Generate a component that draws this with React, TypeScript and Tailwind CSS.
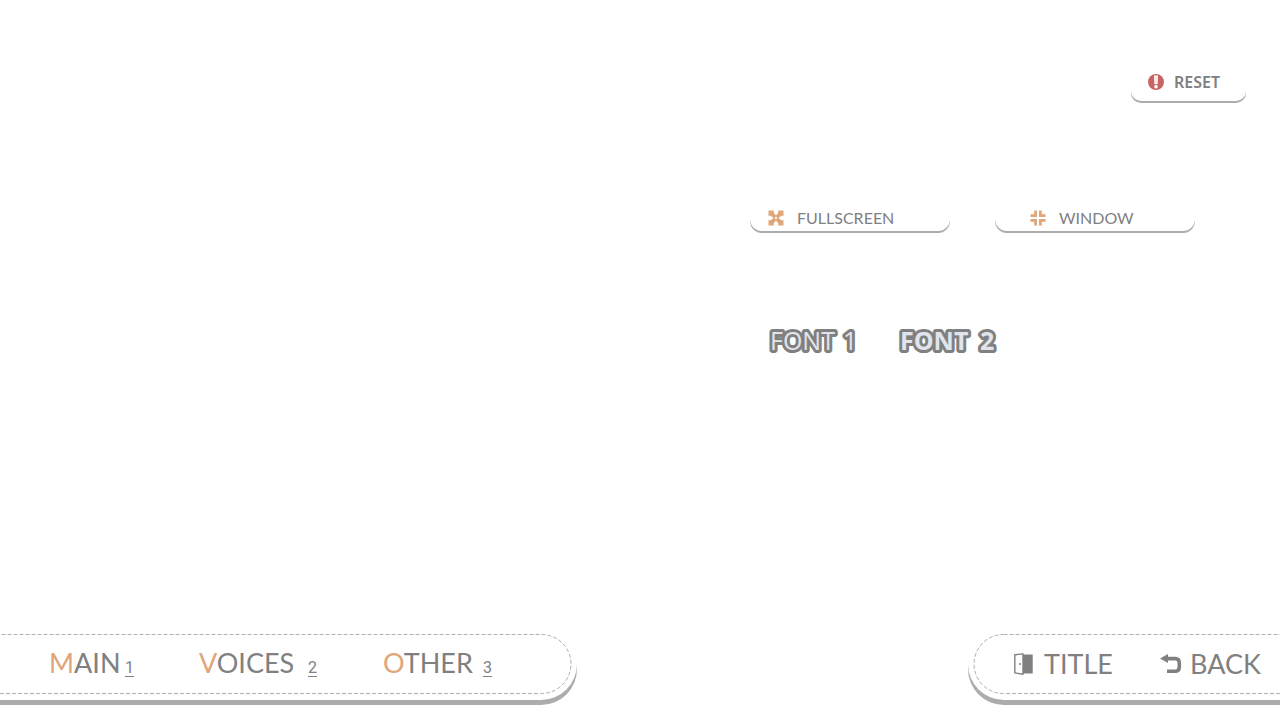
import type { ReactNode } from 'react';

const tabs = [
  { key: '1', first: 'M', rest: 'AIN', width: 'w-[150px]', label: 'w-[76px]' },
  { key: '2', first: 'V', rest: 'OICES', width: 'w-[184px]', label: 'w-[109px]' },
  { key: '3', first: 'O', rest: 'THER', width: 'w-[110px]', label: 'w-[100px]' },
];

function DashedOutline({ side }: { side: 'left' | 'right' }) {
  const place = side === 'left' ? '-left-10 w-[calc(100%+34px)]' : 'left-[6px] w-[calc(100%+34px)]';
  return (
    <svg aria-hidden="true" className={`pointer-events-none absolute top-[6px] h-[59px] overflow-visible ${place}`}>
      <rect x="0" y="0.5" width="100%" height="59" rx="29.5" fill="none" stroke="#b0b0b0" strokeWidth="1" strokeDasharray="4 2" />
    </svg>
  );
}

function ExpandIcon() {
  return (
    <svg aria-hidden="true" viewBox="0 0 16 16" className="size-4 shrink-0" fill="#e0a578">
      {[0, 90, 180, 270].map((a) => (
        <path key={a} transform={`rotate(${a} 8 8)`} d="M0.5 0.5H5.8V2.8L8 5.4V6.6L6.6 8H5.4L2.8 5.8H0.5Z" />
      ))}
    </svg>
  );
}

function ShrinkIcon() {
  return (
    <svg aria-hidden="true" viewBox="0 0 16 16" className="size-4 shrink-0" fill="#e0a578">
      {[0, 90, 180, 270].map((a) => (
        <path key={a} transform={`rotate(${a} 8 8)`} d="M4.2 0.5H7V7H0.5V4.2H4.2Z" />
      ))}
    </svg>
  );
}

function AlertIcon() {
  return (
    <svg aria-hidden="true" viewBox="0 0 16 16" className="size-4 shrink-0">
      <circle cx="8" cy="8" r="8" fill="#c96464" />
      <path d="M6 1.5H10L9.6 10.3H6.4Z" fill="#fff" />
      <path d="M7.6 2.4H8.4V9H7.6Z" fill="#c96464" opacity="0.35" />
      <circle cx="8" cy="12.8" r="1.8" fill="#fff" />
    </svg>
  );
}

function DoorIcon() {
  return (
    <svg aria-hidden="true" viewBox="0 0 20 22" className="h-[22px] w-5 shrink-0">
      <path d="M8 1.5H18.7V20.5H8Z" fill="#808080" />
      <path d="M0.8 1.8L9 0.9V21.2L0.8 19.9Z" fill="#fff" stroke="#808080" strokeWidth="1.4" strokeLinejoin="round" />
      <circle cx="6" cy="11" r="1" fill="#808080" />
    </svg>
  );
}

function ReturnIcon() {
  return (
    <svg aria-hidden="true" viewBox="0 0 22 20" className="h-5 w-[22px] shrink-0">
      <path d="M0 4.4L8 0V9Z" fill="#808080" />
      <path d="M6 4.6H15.2Q19.3 4.6 19.3 9V13Q19.3 17.3 15.2 17.3H7" fill="none" stroke="#808080" strokeWidth="3.6" />
    </svg>
  );
}

function ModeButton({ children, pad }: { children: ReactNode; pad: string }) {
  return (
    <button
      type="button"
      className={`flex h-[31px] w-[200px] items-center gap-[13px] rounded-xl bg-white pt-1 text-base text-[#808080] shadow-[0_2px_0_#acacac] ${pad}`}
    >
      {children}
    </button>
  );
}

function FontButton({ digit, digitX, className }: { digit: string; digitX: number; className: string }) {
  return (
    <button type="button" className={`w-[130px] text-left font-['Open_Sans',sans-serif] text-[25px] ${className}`}>
      <svg
        className="h-9 w-[110px] overflow-visible"
        fill="#e1e4eb"
        stroke="#808080"
        strokeWidth="6"
        strokeLinejoin="round"
        paintOrder="stroke"
      >
        <text x="0" y="27">FONT</text>
        <text x={digitX} y="27">{digit}</text>
      </svg>
    </button>
  );
}

export default function App() {
  return (
    <div className="flex min-h-screen flex-col overflow-x-hidden bg-white pb-[15px] font-[Lato,sans-serif] text-[#808080]">
      <header className="flex justify-end pt-[60px] pr-[34px]">
        <button
          type="button"
          className="flex h-[41px] w-[115px] items-center gap-[10px] rounded-[10px] bg-white pt-[2px] pl-[17px] font-['Noto_Sans',sans-serif] text-base font-semibold shadow-[0_2px_0_#acacac]"
        >
          <AlertIcon />
          RESET
        </button>
      </header>

      <main className="ml-auto w-[530px]">
        <div className="mt-[99px] flex gap-[45px]">
          <ModeButton pad="pl-[18px]"><ExpandIcon />FULLSCREEN</ModeButton>
          <ModeButton pad="pl-[35px]"><ShrinkIcon />WINDOW</ModeButton>
        </div>
        <div className="mt-[92px] flex items-center pl-5">
          <FontButton digit="1" digitX={73} className="font-medium" />
          <FontButton digit="2" digitX={80} className="font-bold" />
        </div>
      </main>

      <footer className="mt-auto flex items-start justify-between pb-[5px] text-[27px] leading-8">
        <nav className="relative flex h-[72px] w-[577px] items-center rounded-r-[36px] bg-white pb-[2px] pl-[49px] shadow-[0_5px_0_#acacac]">
          <DashedOutline side="left" />
          {tabs.map((t) => (
            <button key={t.key} type="button" className={`flex items-baseline text-left ${t.width}`}>
              <span className={t.label}><span className="text-[#e0a578]">{t.first}</span>{t.rest}</span>
              <span className="font-[Roboto,sans-serif] text-base underline decoration-1 underline-offset-3">{t.key}</span>
            </button>
          ))}
        </nav>
        <nav className="relative flex h-[72px] w-[312px] items-center rounded-l-[36px] bg-white pl-[46px] shadow-[0_5px_0_#acacac]">
          <DashedOutline side="right" />
          <button type="button" className="flex w-[146px] items-center gap-[10px]"><DoorIcon />TITLE</button>
          <button type="button" className="flex items-center gap-2"><ReturnIcon />BACK</button>
        </nav>
      </footer>
    </div>
  );
}
